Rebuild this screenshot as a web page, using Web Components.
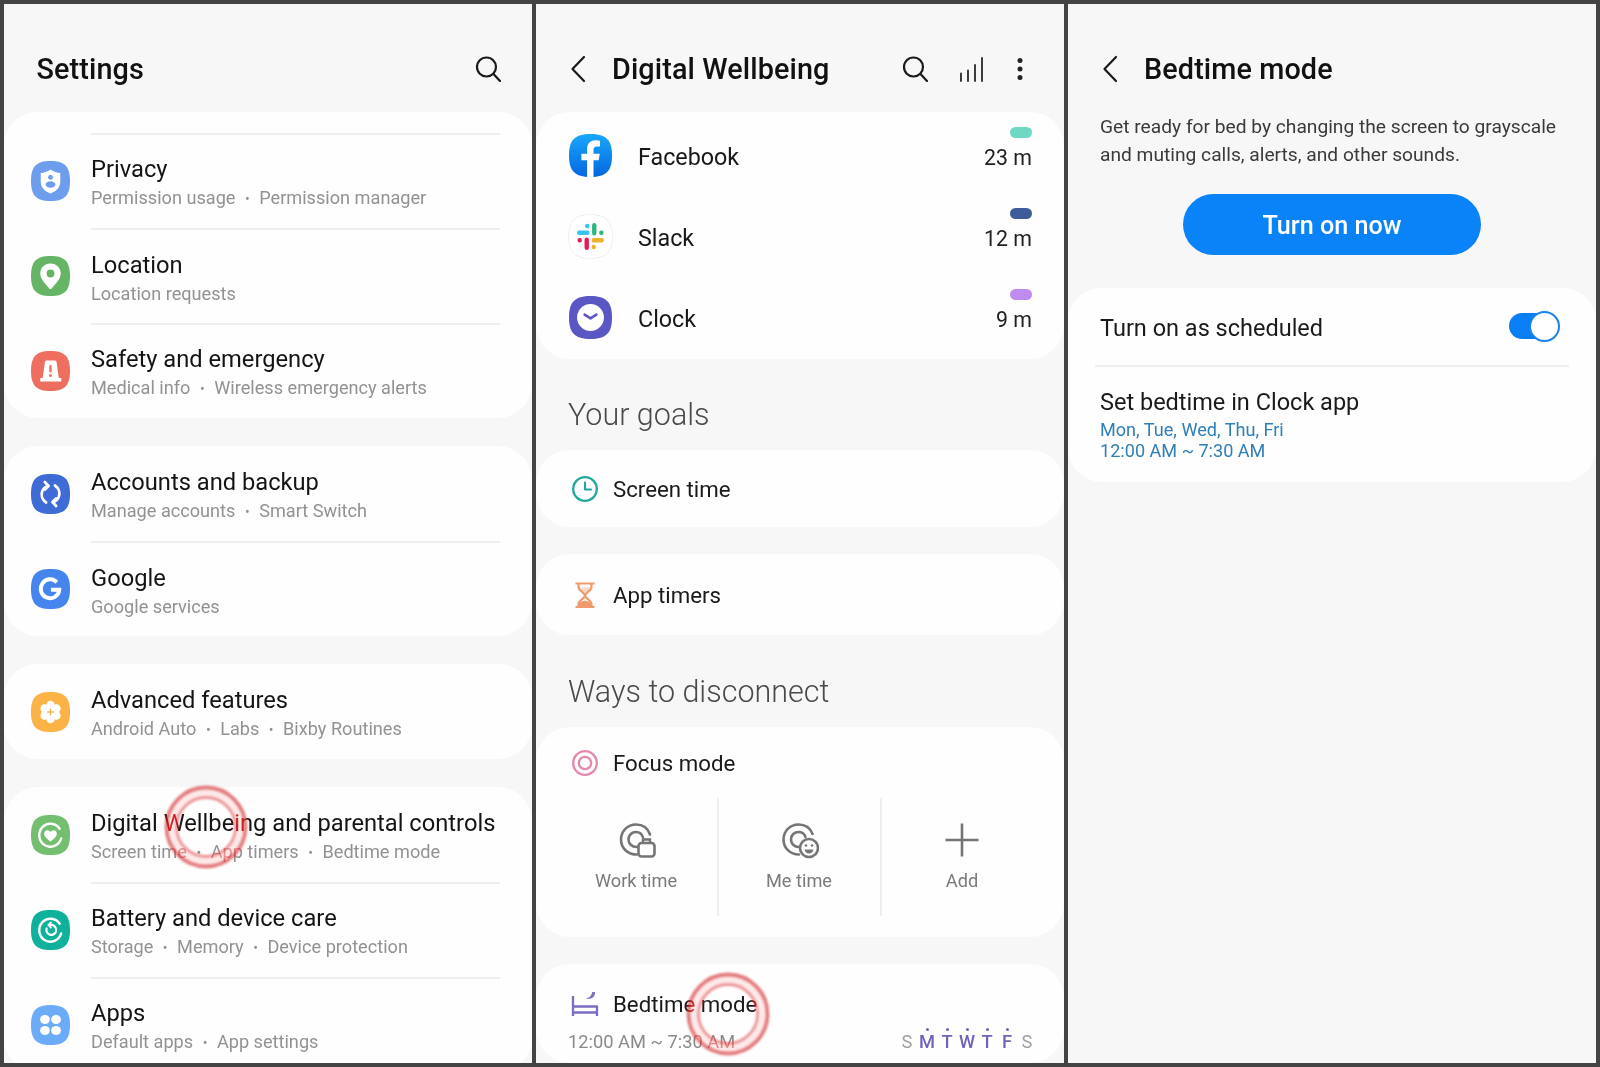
<!DOCTYPE html>
<html lang="en"><head><meta charset="utf-8"><title>Samsung Settings</title>
<style>
html,body{margin:0;padding:0;height:100%;background:#444}
body{font-family:Roboto,"Noto Sans",sans-serif;overflow:hidden}
</style></head><body>
<screen-grid>
  <phone-panel>
    <app-bar label="Settings"><line-icon slot="actions" name="search" style="margin-right:31px"></line-icon></app-bar>
    <ui-card style="padding-top:21px">
      <setting-row divided><app-icon slot="icon" name="privacy"></app-icon>Privacy<sep-list slot="sub"><span>Permission usage</span><b>•</b><span>Permission manager</span></sep-list></setting-row>
      <setting-row divided><app-icon slot="icon" name="location"></app-icon>Location<sep-list slot="sub"><span>Location requests</span></sep-list></setting-row>
      <setting-row divided><app-icon slot="icon" name="safety"></app-icon>Safety and emergency<sep-list slot="sub"><span>Medical info</span><b>•</b><span>Wireless emergency alerts</span></sep-list></setting-row>
    </ui-card>
    <ui-card style="margin-top:28px">
      <setting-row><app-icon slot="icon" name="accounts"></app-icon>Accounts and backup<sep-list slot="sub"><span>Manage accounts</span><b>•</b><span>Smart Switch</span></sep-list></setting-row>
      <setting-row divided><app-icon slot="icon" name="google"></app-icon>Google<sep-list slot="sub"><span>Google services</span></sep-list></setting-row>
    </ui-card>
    <ui-card style="margin-top:28px">
      <setting-row><app-icon slot="icon" name="advanced"></app-icon>Advanced features<sep-list slot="sub"><span>Android Auto</span><b>•</b><span>Labs</span><b>•</b><span>Bixby Routines</span></sep-list></setting-row>
    </ui-card>
    <ui-card style="margin-top:28px">
      <setting-row><app-icon slot="icon" name="wellbeing"></app-icon>Digital Wellbeing and parental controls<sep-list slot="sub"><span>Screen time</span><b>•</b><span>App timers</span><b>•</b><span>Bedtime mode</span></sep-list></setting-row>
      <setting-row divided><app-icon slot="icon" name="battery"></app-icon>Battery and device care<sep-list slot="sub"><span>Storage</span><b>•</b><span>Memory</span><b>•</b><span>Device protection</span></sep-list></setting-row>
      <setting-row divided><app-icon slot="icon" name="apps"></app-icon>Apps<sep-list slot="sub"><span>Default apps</span><b>•</b><span>App settings</span></sep-list></setting-row>
    </ui-card>
    <touch-ripple style="left:160px;top:781px"></touch-ripple>
  </phone-panel>

  <phone-panel>
    <app-bar label="Digital Wellbeing" back>
      <line-icon slot="actions" name="search"></line-icon>
      <line-icon slot="actions" name="bars" style="margin-left:31px"></line-icon>
      <line-icon slot="actions" name="dots" style="margin-left:32px;margin-right:40px"></line-icon>
    </app-bar>
    <ui-card style="padding:3px 0 1px">
      <usage-row time="23 m" color="#6fd8c2"><app-icon slot="icon" name="facebook" style="--s:43px"></app-icon>Facebook</usage-row>
      <usage-row time="12 m" color="#3f5c9a"><app-icon slot="icon" name="slack" style="--s:43px"></app-icon>Slack</usage-row>
      <usage-row time="9 m" color="#bf8bee"><app-icon slot="icon" name="clock" style="--s:43px"></app-icon>Clock</usage-row>
    </ui-card>
    <section-title style="padding-top:36px;padding-bottom:15px">Your goals</section-title>
    <ui-card><goal-row style="height:77px"><line-icon slot="icon" name="screentime"></line-icon>Screen time</goal-row></ui-card>
    <ui-card style="margin-top:27px"><goal-row style="height:81px"><line-icon slot="icon" name="hourglass"></line-icon>App timers</goal-row></ui-card>
    <section-title style="padding-top:37px;padding-bottom:15px">Ways to disconnect</section-title>
    <ui-card style="padding-bottom:21px">
      <goal-row style="height:71px"><line-icon slot="icon" name="focus"></line-icon>Focus mode</goal-row>
      <tile-strip>
        <focus-tile label="Work time"><line-icon name="work"></line-icon></focus-tile>
        <focus-tile label="Me time"><line-icon name="me"></line-icon></focus-tile>
        <focus-tile label="Add"><line-icon name="plus"></line-icon></focus-tile>
      </tile-strip>
    </ui-card>
    <ui-card style="margin-top:27px;flex:1">
      <goal-row style="height:51px;padding-top:14px"><line-icon slot="icon" name="bed"></line-icon>Bedtime mode</goal-row>
      <bed-schedule time="12:00 AM ~ 7:30 AM"></bed-schedule>
    </ui-card>
    <touch-ripple style="left:150px;top:968px"></touch-ripple>
  </phone-panel>

  <phone-panel>
    <app-bar label="Bedtime mode" back></app-bar>
    <intro-text>Get ready for bed by changing the screen to grayscale and muting calls, alerts, and other sounds.</intro-text>
    <pill-button>Turn on now</pill-button>
    <ui-card style="margin-top:33px">
      <toggle-row>Turn on as scheduled</toggle-row>
      <clock-link line1="Mon, Tue, Wed, Thu, Fri" line2="12:00 AM ~ 7:30 AM">Set bedtime in Clock app</clock-link>
    </ui-card>
  </phone-panel>
</screen-grid>

<script>
function def(name, css, html){
  customElements.define(name, class extends HTMLElement{
    constructor(){super();const r=this.attachShadow({mode:'open'});
      const a=n=>this.getAttribute(n)||'';
      r.innerHTML='<style>'+css+'</style>'+(typeof html==='function'?html(a,this):html);}
  });
}
const SQ='M20 0C34.5 0 40 5.5 40 20S34.5 40 20 40 0 34.5 0 20 5.5 0 20 0Z';
const pet=[0,60,120,180,240,300].map(a=>{const x=20+7*Math.cos(a*Math.PI/180+Math.PI/2),y=20+7*Math.sin(a*Math.PI/180+Math.PI/2);return `<circle cx="${x.toFixed(2)}" cy="${y.toFixed(2)}" r="4.3" fill="#fff"/>`}).join('');
const APP={
 privacy:['#6d9eee',`<path d="M20 8.500c3.400 2.400 6.400 3.200 10 3.600v8.400c0 6.400-4.200 9.800-10 12-5.800-2.200-10-5.600-10-12v-8.400c3.600-.4 6.600-1.200 10-3.600Z" fill="#fff"/><circle cx="20" cy="16.300" r="2.500" fill="#6d9eee"/><ellipse cx="20" cy="23.500" rx="5" ry="3.200" fill="#6d9eee"/>`],
 location:['#66b566',`<path d="M20 7.500c6 0 10.500 4.400 10.500 10 0 5.800-5.500 10.500-9.300 15-.6.700-1.800.7-2.400 0-3.800-4.500-9.300-9.200-9.300-15 0-5.600 4.500-10 10.500-10Z" fill="#fff"/><circle cx="20" cy="17.500" r="4" fill="#66b566"/>`],
 safety:['#ee6f60',`<path d="M15.500 9.500h9c1 0 1.500.5 1.700 1.500l2.300 16h2.500v3.500H9.500V27H12l2.300-16c.2-1 .7-1.500 1.200-1.500Z" fill="#fff"/><rect x="18.800" y="14" width="2.400" height="7.500" rx="1" fill="#ee6f60"/><circle cx="20" cy="24.500" r="1.500" fill="#ee6f60"/>`],
 accounts:['#3e6bd6',`<g fill="none" stroke="#fff" stroke-width="2.800" stroke-linecap="round" stroke-linejoin="round"><path d="M15.500 28.500C11.500 26 10 21.500 11.500 17.300 12.500 14.800 14 13 17 12"/><path d="M14.200 8 18 11.900 14.400 15.400"/><path d="M24.500 11.500C28.500 14 30 18.500 28.500 22.700 27.500 25.200 26 27 23 28"/><path d="M25.800 32 22 28.100 25.600 24.600"/></g>`],
 google:['#4685ee',`<path d="M26.500 13.300A9.500 9.500 0 1 0 29 20.800H20.500" fill="none" stroke="#fff" stroke-width="4"/>`],
 advanced:['#fbb346',pet+`<circle cx="20" cy="20" r="7" fill="#fff"/><path d="M20 16.500v7M16.500 20h7" stroke="#f7b552" stroke-width="1.300"/>`],
 wellbeing:['#73bf6f',`<path d="M27.500 11.500A11.500 11.500 0 1 0 31.500 20.500" fill="none" stroke="#fff" stroke-linecap="round" stroke-width="2.400" transform="rotate(15 20 20)"/><path d="M20 26.500c-4-3-6.500-5-6.500-7.800 0-2 1.500-3.400 3.300-3.400 1.400 0 2.500.7 3.200 1.900.7-1.200 1.800-1.900 3.200-1.900 1.800 0 3.300 1.400 3.300 3.400 0 2.800-2.500 4.800-6.500 7.800Z" fill="#fff"/>`],
 battery:['#10b19b',`<g fill="none" stroke="#fff" stroke-linecap="round"><path d="M27.500 11.500A11.500 11.500 0 1 0 31.500 20.500" stroke-width="2.400" transform="rotate(15 20 20)"/><path d="M16 18.500A5 5 0 1 0 20 15" stroke-width="2.200"/><path d="M20.500 12.500 17.800 15 20.500 17.600" stroke-width="1.800" stroke-linejoin="round"/></g>`],
 apps:['#6cabf7',`<g fill="#fff"><ellipse cx="14.300" cy="14.500" rx="5" ry="4.600"/><ellipse cx="25.700" cy="14.500" rx="5" ry="4.600"/><ellipse cx="14.300" cy="25.500" rx="5" ry="4.600"/><ellipse cx="25.700" cy="25.500" rx="5" ry="4.600"/></g>`],
 facebook:['url(#fb)',`<path d="M16.800 40V24.500h-5.300v-6.200h5.300v-4.100c0-5.400 3.200-8.300 8-8.300 1.600 0 3 .2 4 .4v5.400h-2.700c-2.500 0-3.300 1.300-3.300 3.300v3.300h5.800l-1 6.200h-4.800V40Z" fill="#fff"/>`],
 slack:['#fff',`<g stroke-linecap="round" stroke-width="4.100" fill="none"><path d="M9.500 16.500h7.500M17 10.200v.1" stroke="#36c5f0"/><path d="M23.500 9.500v7.500M30 16.500h.1" stroke="#2eb67d"/><path d="M30.500 23.500h-7.500M23 29.800v-.1" stroke="#ecb22e"/><path d="M16.500 30.500v-7.500M10 23.500h-.1" stroke="#e01e5a"/></g>`],
 clock:['#5a57c5',`<circle cx="20" cy="20" r="12.500" fill="#fff"/><path d="M14.500 17.300 20 20.800l5.500-3.500" fill="none" stroke="#5a57c5" stroke-width="2.400" stroke-linecap="round" stroke-linejoin="round"/>`]
};
const FBDEF='<defs><linearGradient id="fb" x1="0" y1="0" x2="0" y2="1"><stop offset="0" stop-color="#18a8fc"/><stop offset="1" stop-color="#0466e0"/></linearGradient></defs>';
def('app-icon',`:host{display:block;width:var(--s,39px);height:var(--s,40px)}svg{display:block;width:100%;height:100%;overflow:visible}`,
 a=>{const n=a('name');const [c,i]=APP[n];
 const edge=n==='slack'?`<path d="${SQ}" fill="none" stroke="#000" stroke-opacity=".13" stroke-width=".9"/>`:'';
 return `<svg viewBox="0 0 40 40" preserveAspectRatio="none" role="img" aria-label="${n}">${FBDEF}<clipPath id="c"><path d="${SQ}"/></clipPath>${edge}<g clip-path="url(#c)"><rect width="40" height="40" fill="${c}"/>${i}</g></svg>`});
const LINE={
 search:[26,26,`<circle cx="11.500" cy="11" r="9.500" fill="none" stroke="#1a1a1a" stroke-width="2.200"/><path d="M18.500 18 25 25" stroke="#1a1a1a" stroke-width="2.200" stroke-linecap="round"/>`],
 bars:[25,25,`<path d="M2 16.500V24M9 13.500V24M16 8V24M23 1V24" stroke="#333" stroke-width="1.900" stroke-linecap="round"/>`],
 dots:[8,24,`<circle cx="4" cy="3.500" r="2.500" fill="#222"/><circle cx="4" cy="12" r="2.500" fill="#222"/><circle cx="4" cy="20.500" r="2.500" fill="#222"/>`],
 screentime:[28,28,`<circle cx="14" cy="14" r="11.800" fill="none" stroke="#22a89b" stroke-width="2.300"/><path d="M14 7.500V14.500H20" fill="none" stroke="#22a89b" stroke-width="2.100" stroke-linecap="round" stroke-linejoin="round"/>`],
 hourglass:[28,28,`<g fill="none" stroke="#f0996a" stroke-width="2.200"><path d="M4.500 2.500H23.500M4.500 26H23.500"/><path d="M7.500 2.500V6C7.500 10 14 11.500 14 14.500 14 17.500 7.500 19 7.500 23V26M20.500 2.500V6C20.500 10 14 11.500 14 14.500 14 17.500 20.500 19 20.500 23V26"/></g><path d="M8 26V23C9 20.500 12 20 14 19.500 16 20 19 20.500 20 23V26Z" fill="#f0996a"/><path d="M9 6.500H19C18 9 15.500 10.500 14 12 12.500 10.500 10 9 9 6.500Z" fill="#f0996a" opacity=".35"/>`],
 focus:[28,28,`<circle cx="14" cy="14" r="11.800" fill="none" stroke="#e588b0" stroke-width="2.300"/><circle cx="14" cy="14" r="6.200" fill="none" stroke="#e588b0" stroke-width="2.300"/>`],
 bed:[28,28,`<g fill="none" stroke="#7b6cc6" stroke-width="2.300"><path d="M2 6V26M26 15.500V26M2 16.500H26M2 22.500H26"/></g><path d="M21 2c0 3-1.800 5.300-6 6.500 4 1 9.500-.5 9-6.500-.9.200-2 .2-3 0Z" fill="#7b6cc6"/>`],
 work:[40,40,`<g fill="none" stroke="#757575" stroke-width="2.600" stroke-linecap="round"><path d="M21 34.500C11.500 34.500 5 28 5 19.500 5 11 11.500 4.500 20 4.500 27 4.500 32 8.500 34 14.500"/><path d="M21 27C15.500 27 12.500 23.500 12.500 19.500 12.500 15 16 12 20 12 23.500 12 26 14 27 17.500"/></g><rect x="22.500" y="23" width="16" height="13.500" rx="3" fill="#fff" stroke="#757575" stroke-width="2.600"/><path d="M27 23v-3.500h7V23" fill="none" stroke="#757575" stroke-width="2.400"/>`],
 me:[40,40,`<g fill="none" stroke="#757575" stroke-width="2.600" stroke-linecap="round"><path d="M20 34.500C11 34.500 4.500 28 4.500 19.500 4.500 11 11 4.500 19.500 4.500 26.500 4.500 31.500 8.500 33.500 14"/><path d="M20 27C15 27 12 23.500 12 19.500 12 15 15.500 12 19.500 12 23 12 25.500 14 26.500 17"/></g><circle cx="30" cy="28" r="9" fill="#fff" stroke="#757575" stroke-width="2.600"/><circle cx="27" cy="25.500" r="1.300" fill="#757575"/><circle cx="33" cy="25.500" r="1.300" fill="#757575"/><path d="M25.500 29.500h9c-.5 2.500-2.300 4-4.500 4s-4-1.500-4.500-4Z" fill="#757575"/>`],
 plus:[40,40,`<path d="M20 3.500V36.500M3.500 20H36.500" stroke="#757575" stroke-width="2.600"/>`]
};
def('line-icon',`:host{display:block;flex:none}svg{display:block}`,
 a=>{const [w,h,p]=LINE[a('name')];return `<svg width="${w}" height="${h}" viewBox="0 0 ${w} ${h}" role="img" aria-label="${a('name')}">${p}</svg>`});

def('screen-grid',`:host{display:grid;grid-template-columns:repeat(3,528px);gap:4px;padding:4px;height:1059px;background:#444}`,`<slot></slot>`);
def('phone-panel',`:host{display:flex;flex-direction:column;position:relative;overflow:hidden;background:#f7f7f7;height:1059px;min-width:0}`,`<slot></slot>`);
def('app-bar',`:host{display:flex;align-items:center;height:50px;padding-top:40px;margin-bottom:18px;color:#111}
 .back{margin:0 26px 0 34px;display:block}h1{font:500 28.800px/50px Roboto,sans-serif;margin:0 0 0 32.500px;flex:1;letter-spacing:.1px}
 .back + h1{margin-left:0}slot{display:flex;align-items:center}`,
 (a,e)=>(e.hasAttribute('back')?`<svg class="back" width="16" height="28" viewBox="0 0 16 28"><path d="M14 2 2.500 14 14 26" fill="none" stroke="#1a1a1a" stroke-width="2.200" stroke-linecap="round" stroke-linejoin="round"/></svg>`:'')+`<h1>${a('label')}</h1><slot name="actions"></slot>`);
def('ui-card',`:host{display:block;background:#fefefe;border-radius:34px}`,`<slot></slot>`);
def('setting-row',`:host{display:grid;grid-template-columns:39px 1fr;column-gap:21px;height:95px;padding:0 32px 0 27px;align-items:stretch}
 .ic{align-self:center}.b{display:flex;flex-direction:column;justify-content:center;border-top:2px solid transparent;min-width:0;padding-top:4px;box-sizing:border-box}
 :host([divided]) .b{border-top-color:#eeeeee}
 .t{font:400 23.700px/30px Roboto,sans-serif;color:#141414;white-space:nowrap}`,
 `<div class="ic"><slot name="icon"></slot></div><div class="b"><div class="t"><slot></slot></div><slot name="sub"></slot></div>`);
def('sep-list',`:host{display:block;font:400 18.150px/27px Roboto,sans-serif;color:#929292;white-space:nowrap}
 ::slotted(b){font-weight:400;font-size:14px;margin:0 9.500px}`,`<slot></slot>`);
def('usage-row',`:host{display:grid;grid-template-columns:43px 1fr auto;column-gap:26px;align-items:center;height:81px;padding:0 32px 0 33px;font:400 23.300px/30px Roboto,sans-serif;color:#181818}
 .tx{padding-top:2px}.r{display:flex;flex-direction:column;align-items:flex-end;padding-bottom:13px}
 .p{width:22px;height:11px;border-radius:6px;margin-bottom:6px}.m{font:400 21.300px/28px Roboto,sans-serif;color:#222}`,
 a=>`<slot name="icon"></slot><div class="tx"><slot></slot></div><div class="r"><div class="p" style="background:${a('color')}"></div><div class="m">${a('time')}</div></div>`);
def('section-title',`:host{display:block;font:300 30.500px/40px Roboto,sans-serif;color:#4a4a4a;padding:0 0 16px 32px}`,`<slot></slot>`);
def('goal-row',`:host{display:flex;align-items:center;padding-left:35px;font:400 22.250px/30px Roboto,sans-serif;color:#1a1a1a}
 .i{width:42px;flex:none}.tx{padding-top:1px}`,`<div class="i"><slot name="icon"></slot></div><div class="tx"><slot></slot></div>`);
def('tile-strip',`:host{display:grid;grid-template-columns:repeat(3,163px);padding-left:19.500px;height:118px}`,`<slot></slot>`);
def('focus-tile',`:host{display:flex;flex-direction:column;align-items:center;padding-top:22px;box-sizing:border-box;border-right:2px solid #eee}
 :host(:last-child){border-right-color:transparent}.l{font:400 18.200px/26px Roboto,sans-serif;color:#7a7a7a;margin-top:8px}`,
 a=>`<slot></slot><div class="l">${a('label')}</div>`);
def('bed-schedule',`:host{display:flex;justify-content:space-between;align-items:flex-end;padding:0 27px 0 32px;height:26px;font:400 18.300px/26px Roboto,sans-serif;color:#8a8a8a}
 .d{display:flex}.c{width:20px;text-align:center;font-weight:500;color:#6e63b8;position:relative}.c.o{color:#a0a0a0;font-weight:400}
 .c:not(.o)::before{content:"";position:absolute;left:50%;margin-left:-1.500px;top:-1px;width:3px;height:3px;border-radius:50%;background:#6e63b8}`,
 a=>`<div>${a('time')}</div><div class="d"><span class="c o">S</span><span class="c">M</span><span class="c">T</span><span class="c">W</span><span class="c">T</span><span class="c">F</span><span class="c o">S</span></div>`);
def('intro-text',`:host{display:block;padding:1px 32px 0;margin-bottom:-1px;font:400 19.200px/28px Roboto,sans-serif;color:#3a3a3a}`,`<slot></slot>`);
def('pill-button',`:host{display:flex;align-items:center;justify-content:center;align-self:center;width:298px;height:61px;box-sizing:border-box;padding-top:2px;margin-top:26px;border-radius:31px;background:#0a82f8;color:#fff;font:500 25.200px/30px Roboto,sans-serif}`,`<slot></slot>`);
def('toggle-row',`:host{display:flex;align-items:center;justify-content:space-between;height:76px;padding:0 36px 0 32px;font:400 23.500px/30px Roboto,sans-serif;color:#1a1a1a;border-bottom:2px solid transparent}
 .tx{padding-top:3px}.s{position:relative;width:51px;height:31px;flex:none;display:flex;align-items:center}.tr{width:46px;height:26px;border-radius:13px;background:#0a7ff5}
 .k{position:absolute;right:0;top:0;width:31px;height:31px;box-sizing:border-box;border-radius:50%;background:#fff;border:2px solid #1c82e8}`,
 `<div class="tx"><slot></slot></div><div class="s"><div class="tr"></div><div class="k"></div></div>`);
def('clock-link',`:host{display:block;height:116px;box-sizing:border-box;padding:21px 32px 0;position:relative}
 .dv{position:absolute;left:27px;right:27px;top:-1px;height:2px;background:#eee}
 .t{font:400 23.500px/30px Roboto,sans-serif;color:#1a1a1a;margin-bottom:2px}.s{font:400 18.100px/21px Roboto,sans-serif;color:#2f7fb9}`,
 a=>`<div class="dv"></div><div class="t"><slot></slot></div><div class="s">${a('line1')}</div><div class="s">${a('line2')}</div>`);
def('touch-ripple',`:host{display:block;position:absolute;width:84px;height:84px;pointer-events:none}
 svg{position:absolute;left:0;top:0;display:block;filter:blur(1px)}.a{mix-blend-mode:screen}.b{mix-blend-mode:multiply}`,
 `<svg class="a" width="84" height="84" viewBox="0 0 84 84"><circle cx="42" cy="42" r="34.500" fill="none" stroke="#d01818" stroke-width="13"/></svg>
  <svg class="b" width="84" height="84" viewBox="0 0 84 84"><circle cx="42" cy="42" r="34.500" fill="none" stroke="#fdeaea" stroke-width="11"/><circle cx="42" cy="42" r="39.500" fill="none" stroke="#e47e80" stroke-width="3.800"/><circle cx="42" cy="42" r="29.500" fill="none" stroke="#ec9698" stroke-width="2.800"/></svg>`);
</script>
</body></html>
